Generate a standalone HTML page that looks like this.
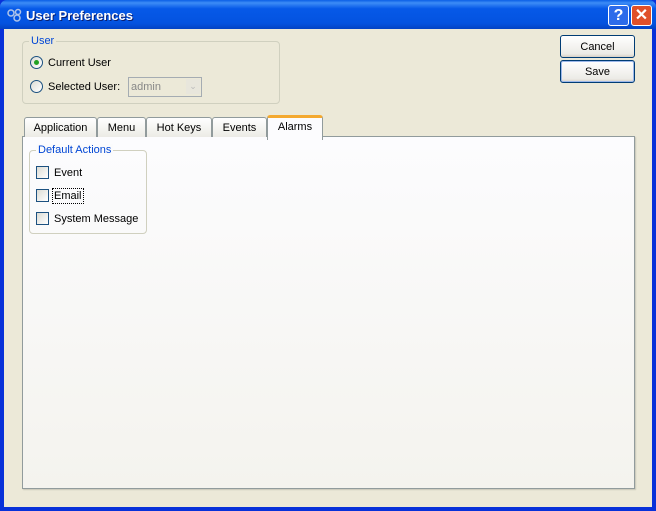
<!DOCTYPE html>
<html><head><style>
body{margin:0;width:656px;height:511px;overflow:hidden;font-family:Tahoma,"Liberation Sans",sans-serif;font-size:11px;color:#000}
.win{position:absolute;left:0;top:0;width:656px;height:511px;background:#0831d9}
.title{position:absolute;left:0;top:0;width:656px;height:29px;background:linear-gradient(#0a5fe6 0%,#3d8cf6 10%,#0659e8 30%,#0453e0 80%,#0343c4 100%);border-radius:7px 7px 0 0}
.title span{position:absolute;left:26px;top:8px;color:#fff;font-weight:bold;font-size:13px;text-shadow:1px 1px #0a1e6e}
.body{position:absolute;left:4px;top:29px;width:648px;height:478px;background:#ece9d8}
.abs{position:absolute}
.grp{position:absolute;border:1px solid #d0d0bf;border-radius:4px}
.leg{position:absolute;background:#ece9d8;color:#0046d5;padding:0 2px}
.radio{position:absolute;width:11px;height:11px;border:1px solid #1c5180;border-radius:50%;background:linear-gradient(135deg,#dcdcd5,#fff)}
.btn{position:absolute;left:560px;width:73px;height:21px;border:1px solid #003c74;border-radius:3px;background:linear-gradient(#fff,#ecebe6 85%,#d6d0c5);text-align:center;line-height:23px}
.tab{position:absolute;top:117px;height:19px;border:1px solid #919b9c;border-bottom:none;border-radius:3px 3px 0 0;background:linear-gradient(#fff,#ecebe5);text-align:center;line-height:21px}
.cb{position:absolute;left:36px;width:11px;height:11px;border:1px solid #1c5180;background:linear-gradient(135deg,#dcdcd5,#fff)}
</style></head><body>
<div class="win">
<div class="title"><svg class="abs" style="left:7px;top:8px" width="16" height="14"><circle cx="4" cy="5" r="3" fill="none" stroke="#b0c4e8" stroke-width="1.5"/><circle cx="11" cy="4" r="2.5" fill="none" stroke="#b0c4e8" stroke-width="1.5"/><circle cx="10" cy="10" r="3" fill="none" stroke="#b0c4e8" stroke-width="1.5"/></svg><span>User Preferences</span>
<div class="abs" style="left:608px;top:5px;width:19px;height:19px;border:1px solid #fff;border-radius:3px;background:#2c6bea;color:#fff;font-weight:bold;font-size:16px;text-align:center;line-height:19px">?</div>
<div class="abs" style="left:631px;top:5px;width:19px;height:19px;border:1px solid #fff;border-radius:3px;background:#e0502a;color:#fff;font-weight:bold;font-size:16px;text-align:center;line-height:19px">✕</div>
</div>
<div class="body"></div>
<div class="grp" style="left:22px;top:41px;width:256px;height:61px"></div>
<div class="leg" style="left:29px;top:35px">User</div>
<div class="radio" style="left:30px;top:56px"><div class="abs" style="left:3px;top:3px;width:5px;height:5px;border-radius:50%;background:#21a121"></div></div>
<div class="abs" style="left:48px;top:57px">Current User</div>
<div class="radio" style="left:30px;top:80px"></div>
<div class="abs" style="left:48px;top:81px">Selected User:</div>
<div class="abs" style="left:128px;top:77px;width:72px;height:18px;border:1px solid #a5acb2;background:#ece9d8;color:#888"><span class="abs" style="left:2px;top:3px">admin</span><div class="abs" style="right:1px;top:1px;width:14px;height:15px;background:#e8e6dc;color:#bbb;text-align:center;font-size:9px;line-height:15px">⌄</div></div>
<div class="btn" style="top:35px">Cancel</div>
<div class="btn" style="top:60px;box-shadow:inset 0 0 0 1px #9cb8ea">Save</div>
<div class="abs" style="left:22px;top:136px;width:611px;height:351px;border:1px solid #919b9c;background:linear-gradient(#fcfcfe,#f4f3ee);box-shadow:1px 1px 1px #c8c5b8"></div>
<div class="tab" style="left:24px;width:71px">Application</div>
<div class="tab" style="left:97px;width:47px">Menu</div>
<div class="tab" style="left:146px;width:64px">Hot Keys</div>
<div class="tab" style="left:212px;width:53px">Events</div>
<div class="tab" style="left:267px;top:115px;height:22px;width:54px;background:#fcfcfe;border-top:3px solid #f4a930;line-height:19px">Alarms</div>
<div class="grp" style="left:29px;top:150px;width:116px;height:82px"></div>
<div class="leg" style="left:36px;top:144px;background:#fbfbfc">Default Actions</div>
<div class="cb" style="top:166px"></div><div class="abs" style="left:54px;top:167px">Event</div>
<div class="cb" style="top:189px"></div><div class="abs" style="left:52px;top:188px;border:1px dotted #000;padding:0 1px;line-height:14px">Email</div>
<div class="cb" style="top:212px"></div><div class="abs" style="left:54px;top:213px">System Message</div>
</div>
</body></html>
